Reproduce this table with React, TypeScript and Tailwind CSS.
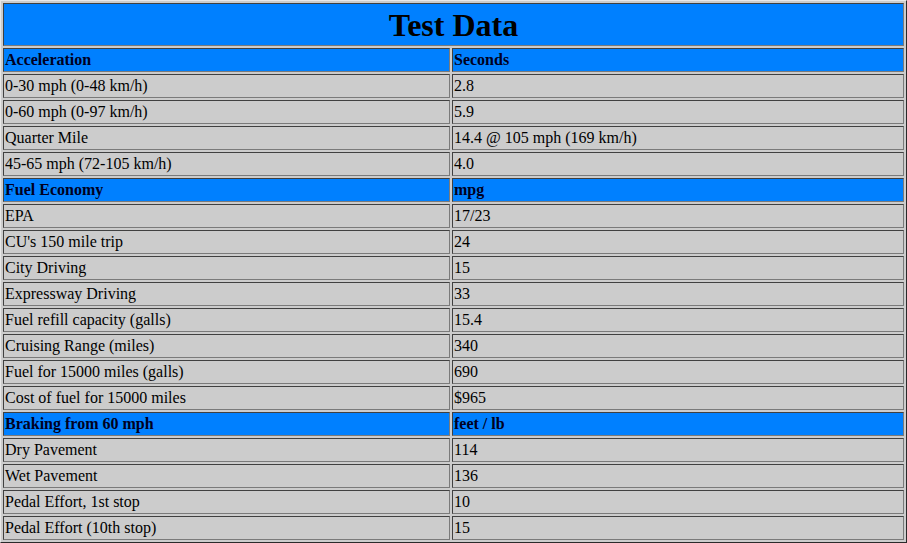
import React from "react";

type Row = { a: string; b: string; head?: boolean };

const rows: Row[] = [
  { a: "Acceleration", b: "Seconds", head: true },
  { a: "0-30 mph (0-48 km/h)", b: "2.8" },
  { a: "0-60 mph (0-97 km/h)", b: "5.9" },
  { a: "Quarter Mile", b: "14.4 @ 105 mph (169 km/h)" },
  { a: "45-65 mph (72-105 km/h)", b: "4.0" },
  { a: "Fuel Economy", b: "mpg", head: true },
  { a: "EPA", b: "17/23" },
  { a: "CU's 150 mile trip", b: "24" },
  { a: "City Driving", b: "15" },
  { a: "Expressway Driving", b: "33" },
  { a: "Fuel refill capacity (galls)", b: "15.4" },
  { a: "Cruising Range (miles)", b: "340" },
  { a: "Fuel for 15000 miles (galls)", b: "690" },
  { a: "Cost of fuel for 15000 miles", b: "$965" },
  { a: "Braking from 60 mph", b: "feet / lb", head: true },
  { a: "Dry Pavement", b: "114" },
  { a: "Wet Pavement", b: "136" },
  { a: "Pedal Effort, 1st stop", b: "10" },
  { a: "Pedal Effort (10th stop)", b: "15" },
];

function Cell({ text, head }: { text: string; head?: boolean }) {
  return (
    <div
      className={`h-[24px] flex items-center px-[1px] border border-t-[#404040] border-l-[#404040] border-b-[#7a7a7a] border-r-[#7a7a7a] text-[16px] leading-none whitespace-nowrap ${
        head ? "bg-[#0080ff] font-bold text-[#000022]" : "bg-[#cccccc] text-black"
      }`}
    >
      {text}
    </div>
  );
}

export default function App() {
  return (
    <div
      className="w-[907px] h-[543px] bg-[#cccccc]"
      style={{ fontFamily: '"Liberation Serif", "Times New Roman", serif' }}
    >
      <div className="border border-t-[#e8e8e8] border-l-[#e8e8e8] border-b-[#2a2a2a] border-r-[#2a2a2a] p-[2px] bg-[#cccccc]">
        <div className="grid grid-cols-[447px_452px] gap-[2px]">
          <div className="col-span-2 h-[43px] flex items-center justify-center bg-[#0080ff] border border-t-[#404040] border-l-[#404040] border-b-[#7a7a7a] border-r-[#7a7a7a] text-[32px] font-bold text-black leading-none">
            Test Data
          </div>
          {rows.map((r, i) => (
            <React.Fragment key={i}>
              <Cell text={r.a} head={r.head} />
              <Cell text={r.b} head={r.head} />
            </React.Fragment>
          ))}
        </div>
      </div>
    </div>
  );
}
